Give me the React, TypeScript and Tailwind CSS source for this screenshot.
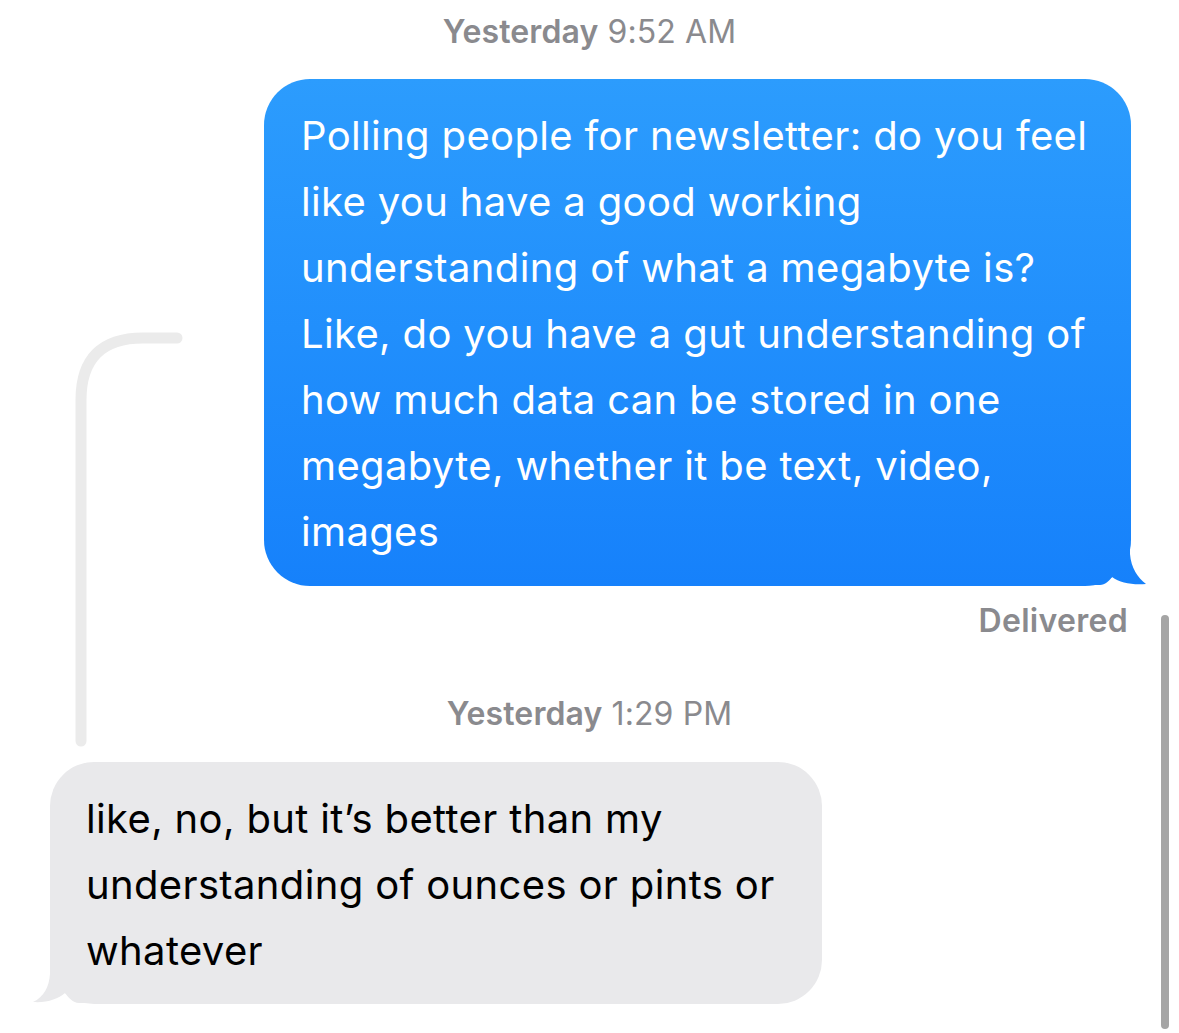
const FONT = { fontFamily: 'Inter, "Noto Sans", sans-serif' };

const SENT = [
  "Polling people for newsletter: do you feel",
  "like you have a good working",
  "understanding of what a megabyte is?",
  "Like, do you have a gut understanding of",
  "how much data can be stored in one",
  "megabyte, whether it be text, video,",
  "images",
];

const RECEIVED = [
  "like, no, but it\u2019s better than my",
  "understanding of ounces or pints or",
  "whatever",
];

function Stamp({ day, time }: { day: string; time: string }) {
  return (
    <div className="text-center text-[32px] leading-[36px] tracking-[0.1px] text-[#8a8a8e]">
      <span className="font-semibold">{day}</span> <span>{time}</span>
    </div>
  );
}

export default function App() {
  return (
    <div
      className="relative w-[1179px] h-[1033px] overflow-hidden bg-white antialiased"
      style={FONT}
    >
      {/* reply thread line */}
      <svg className="absolute left-0 top-0" width="200" height="760">
        <path
          d="M81 741 L81 400 Q81 338 143 338 L177 338"
          fill="none"
          stroke="#ebebeb"
          strokeWidth="11"
          strokeLinecap="round"
        />
      </svg>

      {/* scroll indicator */}
      <div className="absolute left-[1161px] top-[615px] w-[8px] h-[414px] rounded-full bg-[#a5a5a5]" />

      <div className="flex flex-col pt-[14px]">
        <Stamp day="Yesterday" time="9:52 AM" />

        <div className="flex justify-end pr-[48px] mt-[29px]">
          <div className="relative w-[867px] rounded-[46px] bg-gradient-to-b from-[#2c9cfd] to-[#1681fb] pl-[37px] pt-[24px] pb-[21px] text-white text-[40px] leading-[66px] tracking-[0.35px]">
            <svg className="absolute right-[-16px] bottom-0" width="62" height="46" viewBox="1086 541 62 46">
              <defs>
                <linearGradient id="sentTail" gradientUnits="userSpaceOnUse" x1="0" y1="79" x2="0" y2="586">
                  <stop offset="0" stopColor="#2c9cfd" />
                  <stop offset="1" stopColor="#1681fb" />
                </linearGradient>
              </defs>
              <path
                d="M1086 586 L1101 586 C1106 586 1110 582 1113 578 C1121 584 1133 586 1147 585 C1139 579 1132 569 1131 555 L1131 541 L1086 541 Z"
                fill="url(#sentTail)"
              />
            </svg>
            {SENT.map((line) => (
              <div key={line} className="relative whitespace-nowrap">
                {line}
              </div>
            ))}
          </div>
        </div>

        <div className="mt-[17px] pr-[51px] text-right text-[32px] leading-[36px] tracking-[0.3px] font-semibold text-[#8a8a8e]">
          Delivered
        </div>

        <div className="mt-[57px]">
          <Stamp day="Yesterday" time="1:29 PM" />
        </div>

        <div className="flex pl-[50px] mt-[30px]">
          <div className="relative w-[772px] rounded-[44px] bg-[#e9e9eb] pl-[36px] pt-[24px] pb-[20px] text-black text-[40px] leading-[66px] tracking-[0.35px]">
            <svg className="absolute left-[-18px] bottom-0" width="64" height="46" viewBox="32 959 64 46">
              <path
                d="M50 959 L50 975 C49 988 44 998 33 1003 C47 1004 58 1000 65 994 C68 998 73 1004 79 1004 L95 1004 L95 959 Z"
                fill="#e9e9eb"
              />
            </svg>
            {RECEIVED.map((line) => (
              <div key={line} className="relative whitespace-nowrap">
                {line}
              </div>
            ))}
          </div>
        </div>
      </div>
    </div>
  );
}
